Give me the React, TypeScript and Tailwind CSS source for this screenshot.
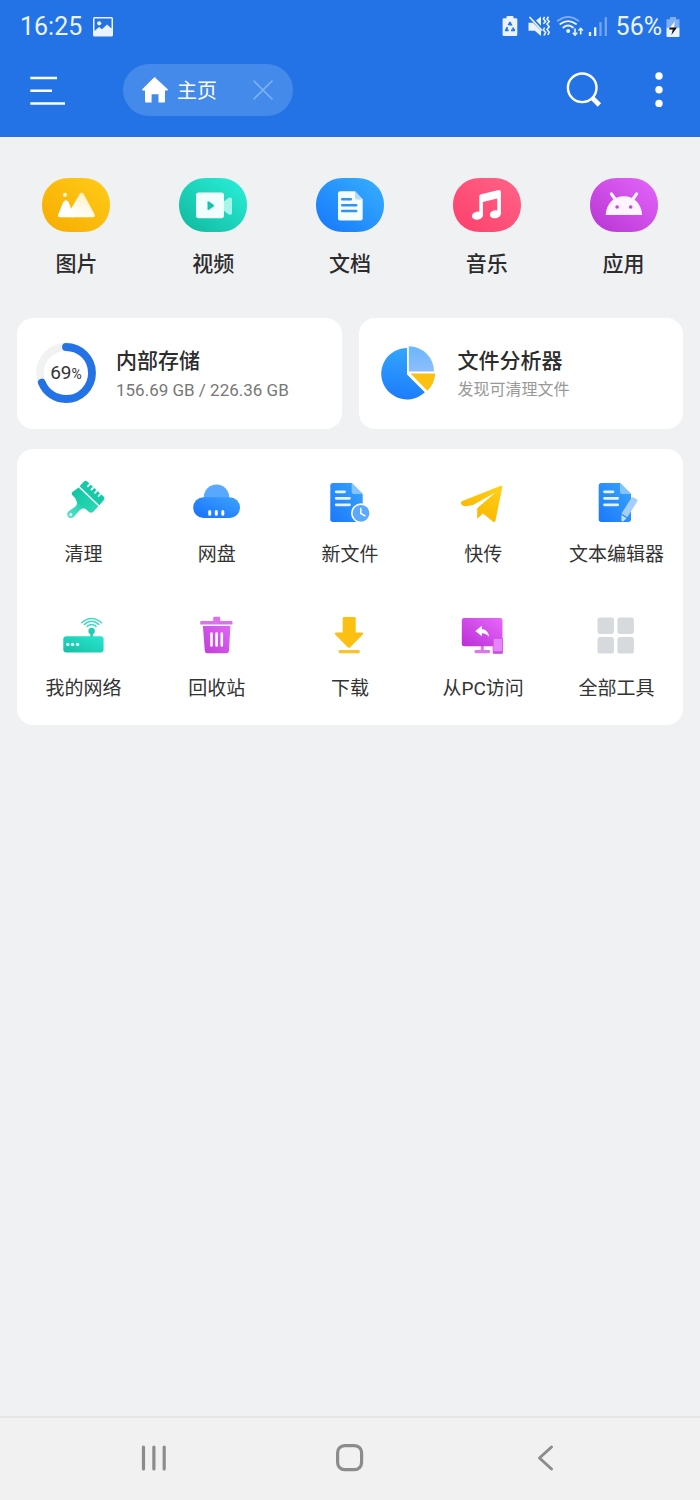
import type { ReactNode } from 'react'

interface Item {
  label: string
  icon: ReactNode
}

interface GradientProps {
  id: string
  from: string
  to: string
}

// bottom-left to top-right
function Gradient({ id, from, to }: GradientProps) {
  return (
    <linearGradient id={id} x1="0" y1="1" x2="1" y2="0">
      <stop offset="0" stopColor={from} />
      <stop offset="1" stopColor={to} />
    </linearGradient>
  )
}

function Pill({ id, from, to, children }: GradientProps & { children: ReactNode }) {
  return (
    <svg width="68" height="54" viewBox="0 0 68 54" aria-hidden="true">
      <defs>
        <Gradient id={id} from={from} to={to} />
      </defs>
      <path
        d="M27 0H41C57 0 68 12 68 27S57 54 41 54H27C11 54 0 42 0 27S11 0 27 0Z"
        fill={`url(#${id})`}
      />
      {children}
    </svg>
  )
}

function ToolIcon({ children }: { children: ReactNode }) {
  return (
    <svg width="48" height="48" viewBox="0 0 48 48" aria-hidden="true">
      {children}
    </svg>
  )
}

const categories: Item[] = [
  {
    label: '图片',
    icon: (
      <Pill id="cat-image" from="#f7ab02" to="#ffcc17">
        <defs>
          <linearGradient id="hill" x1="0.6" y1="0" x2="0.3" y2="1">
            <stop offset="0" stopColor="#fff0c4" />
            <stop offset="1" stopColor="#fff" />
          </linearGradient>
        </defs>
        <circle cx="23" cy="16.8" r="2.1" fill="#fff3cf" />
        <path d="M37.6 16.3Q39.7 13.4 41.8 16.3L52.4 36Q53.6 39.3 50.5 39.3H29L28.6 31.5Z" fill="url(#hill)" />
        <path d="M21.2 24Q24 20.3 26.6 24L28.8 30L32 39.3H18Q15.2 39.3 16.3 36.3Z" fill="#fff" />
      </Pill>
    ),
  },
  {
    label: '视频',
    icon: (
      <Pill id="cat-video" from="#10b79c" to="#2bf0da">
        <path d="M44 24L49.5 20Q53 18.6 53 21.5V34.8Q53 37.8 49.5 36.2L44 32Z" fill="#a5f5e9" />
        <rect x="17" y="14.6" width="28" height="25.6" rx="2.6" fill="#f0fffd" />
        <path d="M28.5 24.2V31Q28.6 32.4 30 31.7L34.6 28.6Q35.7 27.6 34.6 26.8L30 23.5Q28.6 22.8 28.5 24.2Z" fill="#17c4ab" />
      </Pill>
    ),
  },
  {
    label: '文档',
    icon: (
      <Pill id="cat-doc" from="#1677fb" to="#37b0ff">
        <path d="M24 13.2H39L46.7 21.2V40.6Q46.7 42.6 44.7 42.6H24Q22 42.6 22 40.6V15.2Q22 13.2 24 13.2Z" fill="#f4fdff" />
        <path d="M39 13.2L46.7 21.4H40.6Q39 21.4 39 19.8Z" fill="#b4dcff" />
        <path d="M26.2 21.3H34.8M26.2 27.2H40.2M26.2 33H40.2" stroke="#3292f5" strokeWidth="2.5" strokeLinecap="round" />
      </Pill>
    ),
  },
  {
    label: '音乐',
    icon: (
      <Pill id="cat-music" from="#fd3f6b" to="#ff6488">
        <g fill="#fff">
          <path d="M26.3 18.3Q26.3 16.7 28 16.2L45.8 12Q47.9 11.7 47.9 13.8V36H44.3V20.6L29.9 24V38H26.3Z" />
          <ellipse cx="24.4" cy="37.6" rx="5.6" ry="4" transform="rotate(-10 24.4 37.6)" />
          <ellipse cx="42.4" cy="36.2" rx="5.6" ry="4" transform="rotate(-10 42.4 36.2)" />
        </g>
      </Pill>
    ),
  },
  {
    label: '应用',
    icon: (
      <Pill id="cat-app" from="#b734d2" to="#e466fb">
        <path d="M15.7 37C16.3 25.5 24 18.3 33.9 18.3S51.5 25.5 52.1 37Z" fill="#fff4ff" />
        <path d="M21.4 15.9L25.6 21.8M46.6 15.9L42.4 21.8" stroke="#fff4ff" strokeWidth="3.2" strokeLinecap="round" />
        <circle cx="27.1" cy="29" r="1.8" fill="#c544dc" />
        <circle cx="40.7" cy="29" r="1.8" fill="#c544dc" />
      </Pill>
    ),
  },
]

const tools: Item[] = [
  {
    label: '清理',
    icon: (
      <ToolIcon>
        <defs>
          <Gradient id="brush" from="#5fe3cb" to="#10cfab" />
          <linearGradient id="brush-body" x1="0" y1="0" x2="1" y2="1">
            <stop offset="0" stopColor="#0fc49f" />
            <stop offset="1" stopColor="#2fd9b9" />
          </linearGradient>
        </defs>
        <path d="M17 22L25 30Q20.5 30.5 18.5 33.5L14 38.7Q11 41.4 8.2 38.9Q6 36.4 8.3 33.4L15.5 28.5Q17.5 26.5 17 22Z" fill="url(#brush)" />
        <circle cx="10.8" cy="36.6" r="1.4" fill="#fff" />
        <path d="M18.6 9.4L38.4 28.3L33 34Q31 35.6 29 34Q26.5 31 23 30L16.6 23.5Q15.5 19.5 12.4 17.3Q11 15.6 12.4 14Z" fill="url(#brush-body)" />
        <path d="M19.6 8.3L24 3.6Q25.5 2.2 27.2 3.5L43.8 18.8Q45.1 20.4 43.8 22L39.4 27.2Z" fill="#14cba8" />
        <path d="M30.4 5.6L27.8 8.4M34 8.8L31.4 11.6M37.6 12L35 14.8M41.2 15.2L38.6 18" stroke="#fff" strokeWidth="1.8" strokeLinecap="round" />
      </ToolIcon>
    ),
  },
  {
    label: '网盘',
    icon: (
      <ToolIcon>
        <defs>
          <Gradient id="cloud" from="#1670fa" to="#3da2ff" />
        </defs>
        <circle cx="23.5" cy="19.2" r="12.7" fill="#58a9fe" />
        <rect x="0.2" y="19.3" width="46.8" height="20.7" rx="10.3" fill="url(#cloud)" />
        <path d="M16.7 33.4V36.3M23.3 33.4V36.3M29.8 33.4V36.3" stroke="#fff" strokeWidth="3" strokeLinecap="round" />
      </ToolIcon>
    ),
  },
  {
    label: '新文件',
    icon: (
      <ToolIcon>
        <defs>
          <Gradient id="new-file" from="#1c78fa" to="#36a5fe" />
        </defs>
        <path d="M7 5H25.7L36.7 16V44H7Q4.3 44 4.3 41.3V7.7Q4.3 5 7 5Z" fill="url(#new-file)" />
        <path d="M25.7 5L36.7 16H27.7Q25.7 16 25.7 14Z" fill="#84c3fd" />
        <path d="M10.2 13.8H18.6M10.2 20.3H23.5M10.2 26.8H23.5" stroke="#e4f4ff" strokeWidth="2.8" strokeLinecap="round" />
        <circle cx="35" cy="35.3" r="9.2" fill="#5ba8fc" stroke="#fff" strokeWidth="1.6" />
        <path d="M34.8 30.5V35.5L39 37.8" fill="none" stroke="#fff" strokeWidth="1.5" strokeLinecap="round" />
      </ToolIcon>
    ),
  },
  {
    label: '快传',
    icon: (
      <ToolIcon>
        <defs>
          <linearGradient id="plane" x1="1" y1="0" x2="0.4" y2="1">
            <stop offset="0" stopColor="#ffd21a" />
            <stop offset="1" stopColor="#fab400" />
          </linearGradient>
        </defs>
        <path d="M41.8 7.8Q43.6 7.4 43.3 9.2L36.4 43Q35.6 44.9 33.9 43.5L24 35.5L18.2 40.7V30.3L36.8 14.2L14 27Q10 28 5.8 28.3Q2 27.5 1.8 24.8Q2 23.5 4 22.8Z" fill="url(#plane)" />
      </ToolIcon>
    ),
  },
  {
    label: '文本编辑器',
    icon: (
      <ToolIcon>
        <defs>
          <Gradient id="editor" from="#1c78fa" to="#36a5fe" />
        </defs>
        <path d="M9.4 5H28L39 16V41.3Q39 44 36.3 44H9.4Q6.7 44 6.7 41.3V7.7Q6.7 5 9.4 5Z" fill="url(#editor)" />
        <path d="M28 5L39 16H30Q28 16 28 14Z" fill="#84c3fd" />
        <path d="M12.5 13.8H21M12.5 20.3H25.7M12.5 26.8H25.7" stroke="#e4f4ff" strokeWidth="2.8" strokeLinecap="round" />
        <path d="M39.2 20.2Q40 18.8 41.5 19.5L44.7 21.3Q46 22.2 45.3 23.5L35.3 39.2L29.4 35.6Z" fill="#a5cdfd" />
        <path d="M29.4 37L34.6 40.2L31.2 43.4Q29.9 44 29.5 42.6Z" fill="#c3defe" />
      </ToolIcon>
    ),
  },
  {
    label: '我的网络',
    icon: (
      <ToolIcon>
        <defs>
          <Gradient id="router" from="#14bfa3" to="#2be6d0" />
        </defs>
        <path d="M31.6 19V26" stroke="#1fcdb4" strokeWidth="2.6" />
        <circle cx="31.6" cy="19" r="3.2" fill="#1fcdb4" />
        <path d="M27.2 14.4Q31.6 10.6 36 14.4M24.4 12.4Q31.6 6 38.8 12.4M21.6 10.8Q31.6 2.2 41.6 10.8" fill="none" stroke="#3fd9c2" strokeWidth="1.5" strokeLinecap="round" />
        <rect x="3.3" y="24.3" width="40.3" height="16.3" rx="3" fill="url(#router)" />
        <g fill="#e6fffb">
          <circle cx="7.7" cy="32.4" r="1.7" />
          <circle cx="12.6" cy="32.4" r="1.7" />
          <circle cx="17.6" cy="32.4" r="1.7" />
        </g>
      </ToolIcon>
    ),
  },
  {
    label: '回收站',
    icon: (
      <ToolIcon>
        <defs>
          <Gradient id="trash" from="#bd3dd8" to="#e167f8" />
        </defs>
        <path d="M20.2 9V6Q20.2 4.8 21.4 4.8H26Q27.2 4.8 27.2 6V9H38.6Q39.5 9 39.5 9.9V12.6H7.2V9.9Q7.2 9 8.1 9Z" fill="#dc70ee" />
        <path d="M9.9 14H37.4L36 38.8Q35.8 41.3 33.4 41.3H14.4Q12 41.3 11.8 38.8Z" fill="url(#trash)" />
        <path d="M18.5 21.6V33.4M23.6 21.6V33.4M28.8 21.6V33.4" stroke="#fff" strokeWidth="2.6" strokeLinecap="round" />
      </ToolIcon>
    ),
  },
  {
    label: '下载',
    icon: (
      <ToolIcon>
        <path d="M18 5H28.4Q29.7 5 29.7 6.3V20.5H36.3Q38 21 36.8 22.4L24.3 35.2Q23 36.5 21.7 35.2L9.2 22.4Q8 21 9.7 20.5H16.7V6.3Q16.7 5 18 5Z" fill="#fbc012" />
        <rect x="12.7" y="38" width="21" height="3.3" rx="1" fill="#f8c32c" />
      </ToolIcon>
    ),
  },
  {
    label: '从PC访问',
    icon: (
      <ToolIcon>
        <defs>
          <Gradient id="pc" from="#b92fd6" to="#e867fb" />
        </defs>
        <path d="M21.8 34H24.8V38H30Q31.2 38 31.2 39.6T30 41.3H16.7Q15.5 41.3 15.5 39.6T16.7 38H21.8Z" fill="#dc78ee" />
        <rect x="2.8" y="6" width="40.7" height="28.3" rx="2.4" fill="url(#pc)" />
        <path d="M16.3 19L22.8 13.8V16.9Q29.5 17.6 30 25Q27.4 21.3 22.8 21.3V24.3Z" fill="#fff" />
        <rect x="34.2" y="26.3" width="9.3" height="15" rx="0.8" fill="#e983fb" stroke="#c64be0" strokeWidth="0.8" />
        <path d="M34 39.3H43.7V41.5H34Z" fill="#c44fdc" />
      </ToolIcon>
    ),
  },
  {
    label: '全部工具',
    icon: (
      <ToolIcon>
        <g fill="#d7dadd">
          <rect x="5.5" y="5.4" width="16.5" height="16.5" rx="2.6" />
          <rect x="25.4" y="5.4" width="16.5" height="16.5" rx="2.6" />
          <rect x="5.5" y="25.1" width="16.5" height="16.5" rx="2.6" />
          <rect x="25.4" y="25.1" width="16.5" height="16.5" rx="2.6" />
        </g>
      </ToolIcon>
    ),
  },
]

function StatusBar() {
  return (
    <div className="flex h-[54px] items-center justify-between px-5 text-[#eaf3ff]">
      <div className="flex items-center gap-[11px]">
        <span className="text-[25px] leading-8">16:25</span>
        <svg width="20" height="20" viewBox="0 0 20 20" aria-hidden="true">
          <path
            d="M1.5 0H18.5Q20 0 20 1.5V18Q20 19.5 18.5 19.5H1.5Q0 19.5 0 18V1.5Q0 0 1.5 0ZM1.5 1.5V14L6 10L9 12.3L14 7.4L18.5 11.5V1.5Z"
            fill="currentColor"
            fillRule="evenodd"
          />
          <circle cx="6.2" cy="6.3" r="2.1" fill="currentColor" />
        </svg>
      </div>
      <div className="flex items-center">
        <svg width="106" height="22" viewBox="0 0 106 22" aria-hidden="true">
          {/* power saving */}
          <path d="M4.5 1Q4.5 0 5.5 0H10.5Q11.5 0 11.5 1V2.3H14Q15.3 2.3 15.3 3.6V18.7Q15.3 20 14 20H1.9Q0.6 20 0.6 18.7V3.6Q0.6 2.3 1.9 2.3H4.5Z" fill="currentColor" />
          <path
            d="M8 6.6L12.2 14.4H3.8Z"
            fill="none"
            stroke="#2373e6"
            strokeWidth="1.9"
            strokeLinejoin="round"
            strokeDasharray="6.4 2.3"
            strokeDashoffset="3"
          />
          {/* vibrate */}
          <path d="M26.5 6.8H31L39 14.7V20L32.8 14.7H26.5ZM34 4.5L39 0.5V9.7Z" fill="currentColor" />
          <path d="M27.5 1L40 14.5" stroke="currentColor" strokeWidth="1.7" />
          <path d="M42.6 0.8L41.4 3L43.6 5.4L41.4 7.8M42.6 11.5L41.4 14L43.6 16.3L42 19.5M46.5 0.8L45 3L47.2 5.4L45 8L47.2 10.7L45 13.5L47.2 16.3L45.8 19" fill="none" stroke="currentColor" strokeWidth="1.6" />
          {/* wifi */}
          <g fill="none" stroke="currentColor" strokeWidth="1.9" strokeLinecap="round">
            <path d="M55.8 4.8Q66 -3 76.5 4.8" opacity="0.45" />
            <path d="M58.3 8Q66 2.2 74 8M61.3 11.4Q66 7.6 71 11.4" />
          </g>
          <circle cx="66.2" cy="15" r="2" fill="currentColor" />
          <path d="M73 12.5V19M70.8 16.8L73 19L75.2 16.8M78.7 18.5V12.3M76.5 14.5L78.7 12.3L80.9 14.5" fill="none" stroke="currentColor" strokeWidth="1.6" />
          {/* signal */}
          <path d="M88 16V20M93.2 11.2V20" stroke="currentColor" strokeWidth="2.3" />
          <path d="M98.5 6V20M103.8 1.3V20" stroke="currentColor" strokeWidth="2.3" opacity="0.4" />
        </svg>
        <span className="ml-2 text-[25px] leading-8">56%</span>
        <svg className="ml-1" width="14" height="20" viewBox="0 0 14 20" aria-hidden="true">
          <path d="M4 0H10V2.3H13.5V10.5H0.5V2.3H4Z" fill="#7fb0f4" />
          <path d="M0.5 10.5H13.5V19Q13.5 20 12.5 20H1.5Q0.5 20 0.5 19Z" fill="currentColor" />
          <path d="M8.8 4.5L3.6 11H8Z" fill="#fff" />
          <path d="M3.6 10.6H11L5.4 18L6.8 12.6H3.2Z" fill="#111" />
        </svg>
      </div>
    </div>
  )
}

function Toolbar() {
  return (
    <div className="flex h-[72px] items-center pl-[30px] text-white">
      <button aria-label="菜单">
        <svg width="35" height="30" viewBox="0 0 35 30" aria-hidden="true">
          <path d="M0.3 3H27M0.3 15.8H22M0.3 28.6H35" stroke="currentColor" strokeWidth="2.5" />
        </svg>
      </button>
      <div className="ml-[58px] flex h-[52px] w-[170px] items-center rounded-full bg-[#448aea] pr-5 pl-[19px]">
        <button className="flex items-center gap-2">
          <svg width="27" height="26" viewBox="0 0 27 26" aria-hidden="true">
            <path d="M13 0.4L26 12.5Q26 13.6 25 13.6H23V24.5Q23 25.5 22 25.5H16.5V17.2H9.6V25.5H4Q3 25.5 3 24.5V13.6H1Q0 13.6 0 12.5L11.5 0.9Q13 -0.3 14.5 0.9Z" fill="currentColor" />
          </svg>
          <span className="pt-0.5 text-[20px] leading-7">主页</span>
        </button>
        <button className="ml-auto" aria-label="关闭">
          <svg width="20" height="20" viewBox="0 0 20 20" aria-hidden="true">
            <path d="M1 1L19 19M19 1L1 19" stroke="#7db1f4" strokeWidth="1.6" strokeLinecap="round" />
          </svg>
        </button>
      </div>
      <button className="ml-auto" aria-label="搜索">
        <svg width="36" height="36" viewBox="0 0 36 36" aria-hidden="true">
          <circle cx="16.2" cy="15.8" r="14.3" fill="none" stroke="currentColor" strokeWidth="2.4" />
          <path d="M26 25.6L33.4 33" stroke="currentColor" strokeWidth="4.8" />
        </svg>
      </button>
      <button className="mr-[37px] ml-[53px]" aria-label="更多">
        <svg width="8" height="36" viewBox="0 0 8 36" aria-hidden="true">
          <g fill="currentColor">
            <circle cx="4" cy="4" r="3.7" />
            <circle cx="4" cy="17.7" r="3.7" />
            <circle cx="4" cy="31.4" r="3.7" />
          </g>
        </svg>
      </button>
    </div>
  )
}

function UsageRing({ percent }: { percent: number }) {
  return (
    <div className="relative size-[60px] shrink-0">
      <svg width="60" height="60" viewBox="0 0 60 60" fill="none" aria-hidden="true">
        <circle cx="30" cy="30" r="26" stroke="#f0f2f4" strokeWidth="7.8" />
        <circle
          cx="30"
          cy="30"
          r="26"
          stroke="#2373e6"
          strokeWidth="7.8"
          strokeLinecap="round"
          pathLength="100"
          strokeDasharray={`${percent} 100`}
          transform="rotate(-90 30 30)"
        />
      </svg>
      <span className="absolute inset-0 flex items-baseline justify-center text-[19px] leading-[60px] text-[#333]">
        {percent}
        <span className="text-[14px]">%</span>
      </span>
    </div>
  )
}

function PieIcon() {
  return (
    <svg className="shrink-0" width="60" height="60" viewBox="-2 -2 60 60" aria-hidden="true">
      <defs>
        <linearGradient id="pie" x1="0.5" y1="0" x2="0.4" y2="1">
          <stop offset="0" stopColor="#33a5fe" />
          <stop offset="1" stopColor="#1c7cfb" />
        </linearGradient>
        <linearGradient id="slice" x1="0" y1="0" x2="0" y2="1">
          <stop offset="0" stopColor="#6ab7fc" />
          <stop offset="1" stopColor="#8fbdfc" />
        </linearGradient>
      </defs>
      <path d="M27 3A25.7 25.7 0 1 0 44.8 47.2L27 29.5Z" fill="url(#pie)" />
      <path d="M28.8 1.3A25 25 0 0 1 54 26.6H28.8Z" fill="url(#slice)" />
      <path d="M30.5 28.6H55.2A25 25 0 0 1 47.3 45.8Z" fill="#fcc010" />
    </svg>
  )
}

interface InfoCardProps {
  icon: ReactNode
  title: string
  detail: string
  detailClass: string
}

function InfoCard({ icon, title, detail, detailClass }: InfoCardProps) {
  return (
    <button className="flex items-start gap-5 rounded-2xl bg-white px-[19px] pt-[25px] pb-[26px] text-left">
      {icon}
      <span className="flex min-w-0 flex-col pt-0.5">
        <span className="text-[21px] leading-8 font-medium text-[#2c2c2c]">{title}</span>
        <span className={`leading-[26px] ${detailClass}`}>{detail}</span>
      </span>
    </button>
  )
}

function NavBar() {
  return (
    <nav className="grid h-[84px] grid-cols-3 border-t-2 border-[#e4e5e6] bg-[#f1f1f1] px-14 pb-0.5 text-[#8c8c8c]">
      <button className="flex items-center justify-center" aria-label="最近任务">
        <svg width="28" height="28" viewBox="0 0 28 28" aria-hidden="true">
          <path d="M3.5 3V25M13.9 3V25M24.2 3V25" stroke="currentColor" strokeWidth="3.2" strokeLinecap="round" />
        </svg>
      </button>
      <button className="flex items-center justify-center" aria-label="主屏幕">
        <svg width="28" height="28" viewBox="0 0 28 28" aria-hidden="true">
          <rect x="1.6" y="1.6" width="24" height="24" rx="7" fill="none" stroke="currentColor" strokeWidth="3.2" />
        </svg>
      </button>
      <button className="flex items-center justify-center" aria-label="返回">
        <svg width="28" height="28" viewBox="0 0 28 28" aria-hidden="true">
          <path d="M19.5 3L7.5 14L19.5 25" fill="none" stroke="currentColor" strokeWidth="3" strokeLinecap="round" strokeLinejoin="round" />
        </svg>
      </button>
    </nav>
  )
}

export default function App() {
  return (
    <div className="flex min-h-screen flex-col bg-[#f0f1f3] font-[Roboto,'Noto_Sans_CJK_SC',sans-serif]">
      <header className="bg-[#2373e6] pb-[11px]">
        <StatusBar />
        <Toolbar />
      </header>

      <main className="flex flex-1 flex-col">
        <div className="grid grid-cols-5 px-2 pt-[41px] pb-10">
          {categories.map((item) => (
            <button key={item.label} className="flex flex-col items-center gap-[18px]">
              {item.icon}
              <span className="text-[21px] leading-7 font-medium text-[#2c2c2c]">{item.label}</span>
            </button>
          ))}
        </div>

        <div className="flex flex-col gap-5 px-[17px]">
          <div className="grid grid-cols-2 gap-[17px]">
            <InfoCard
              icon={<UsageRing percent={69} />}
              title="内部存储"
              detail="156.69 GB / 226.36 GB"
              detailClass="text-[17px] text-[#777]"
            />
            <InfoCard
              icon={<PieIcon />}
              title="文件分析器"
              detail="发现可清理文件"
              detailClass="text-[16px] text-[#999]"
            />
          </div>

          <div className="grid grid-cols-5 gap-y-[43px] rounded-2xl bg-white pt-[29px] pb-[22px]">
            {tools.map((item) => (
              <button key={item.label} className="flex flex-col items-center gap-[15px]">
                {item.icon}
                <span className="text-[19px] leading-7 whitespace-nowrap text-[#333]">{item.label}</span>
              </button>
            ))}
          </div>
        </div>
      </main>

      <NavBar />
    </div>
  )
}
